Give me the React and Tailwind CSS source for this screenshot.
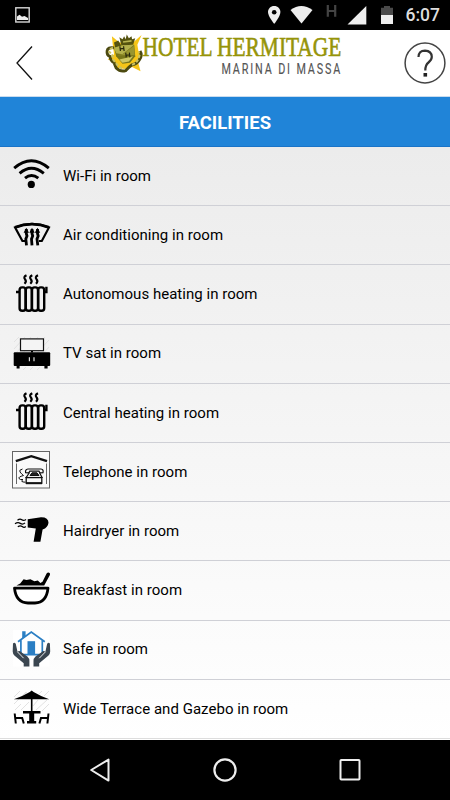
import { clsx } from "clsx";

function WifiIcon() {
  return (
    <g fill="none" stroke="#000" strokeWidth="2.9">
      <path d="M3.2 12.2Q20.3 -2.6 37.8 12.2" />
      <path d="M8.6 17.4Q20.3 7.2 32.8 17.4" />
      <path d="M14 22.2Q20.5 16.6 27.3 22.2" />
      <circle cx="20.3" cy="28.4" r="3.6" fill="#000" stroke="none" />
    </g>
  );
}

function AirIcon() {
  return (
    <g fill="none" stroke="#000" strokeWidth="2.2">
      <path d="M14 26H11.4L4 12.4Q21 5.4 38 12.4L30.8 26H28" />
      <path d="M4 12.4Q21 5.8 38 12.4" strokeWidth="2.8" />
      <path d="M15.3 14V18.5L16 21L14.8 24L15.5 30.4M21 14V18.5L21.7 21L20.5 24L21 30.4M26.5 14V18.5L27.2 21L26 24L26.8 30.4" strokeWidth="2.8" />
      <path d="M12.6 17.7L15.3 12.7L18 17.7ZM18.3 17.7L21 12.7L23.7 17.7ZM23.8 17.7L26.5 12.7L29.2 17.7Z" fill="#000" stroke="none" />
    </g>
  );
}

function HeatingIcon() {
  return (
    <g fill="none" stroke="#000" strokeWidth="2.4">
      <path d="M15.5 0.3Q12 2 14 4.2T13.5 8.8M21.3 0.3Q17.8 2 19.8 4.2T19.3 8.8M27 0.3Q23.5 2 25.5 4.2T25 8.8" strokeWidth="2.1" />
      <rect x="8.6" y="12.400" width="6" height="23.400" rx="2.6" />
      <rect x="14.8" y="12.400" width="6" height="23.400" rx="2.6" />
      <rect x="21" y="12.400" width="6" height="23.400" rx="2.6" />
      <rect x="27.2" y="12.400" width="6" height="23.400" rx="2.6" />
      <path d="M5 17H9M33 17H35.4V11.8" />
    </g>
  );
}

function TvIcon() {
  return (
    <g>
      <path d="M3 8L8 3M3 15L14 3M3 21L20 3M10 21L27 3M17 21L34 3M24 21L38 6M31 21L38 13M12 36L15 33M19 36L22 33M26 36L29 33" stroke="#e2e2e2" strokeWidth="1" />
      <rect x="9.5" y="4.9" width="23" height="11.8" fill="#f4f4f4" stroke="#111" strokeWidth="1.2" />
      <path d="M20 17H22V18.5H20Z" />
      <rect x="2.7" y="18.3" width="36.5" height="13.8" rx="1" />
      <path d="M5.6 32H8.6V34.4H5.6ZM33.4 32H36.6V34.4H33.4Z" />
      <path d="M18.4 23.3V27.2M23 23.3V27.2" stroke="#ddd" strokeWidth="1.2" />
    </g>
  );
}

function TelephoneIcon() {
  return (
    <g fill="none" stroke="#111">
      <rect x="1.5" y="-0.5" width="37" height="36.5" fill="#fafafa" stroke="#666" />
      <path d="M4.8 9.2L20.3 4.2L36 9.2" strokeWidth="2.4" />
      <path d="M5.5 11.5V32M35.5 11.5V32" stroke="#666" />
      <path d="M14.6 20.6Q14 17.4 17 17H30Q32.8 17.4 32 20.6L28.8 20.8L28 19.2H18.8L17.8 20.8Z" strokeWidth="1.2" />
      <path d="M18.5 20.5L15.2 25.5H31L28.5 20.5" strokeWidth="1.2" />
      <path d="M19 23.5L21 20.8H26L28 23.5Z" fill="#222" />
      <rect x="15.2" y="25.6" width="15.6" height="5.6" strokeWidth="1.3" />
      <path d="M15 31.2H31" strokeWidth="2" />
      <path d="M11.5 17Q7.5 18 9 20T12.5 23.5Q7 25 8 26.5T12 27.5Q8.5 30 14.5 30.2" />
    </g>
  );
}

function HairdryerIcon() {
  return (
    <g>
      <path d="M16.7 8.2L30 6.2Q37.5 6.1 37.5 11.8Q37 16.6 31.6 18.6L29.4 30.8H22.6L24.8 17.5L16.7 16.5Z" />
      <path d="M6.5 9.2Q9 7.4 10.8 8.8T15 8.4M4 12.800Q6.800 10.800 9.300 12.400T14 11.900M6.800 15.800Q9.300 14.200 11.200 15.600T14.800 15.600" fill="none" stroke="#000" strokeWidth="1.3" />
    </g>
  );
}

function BreakfastIcon() {
  return (
    <g>
      <path d="M5.4 14.4L9.2 12.6L12.6 8.3L15.5 8.9L19.4 8.2L23.4 10.2L26.8 9.5L29.4 12L31.5 10.8L35.6 2.4Q37.4 0.4 39 2.6Q39.4 4 37.8 6L33.2 14.6Z" />
      <path d="M3.5 17.2Q5 31.8 17 32H24Q35.5 31.8 37 17.2Z" fill="#fff" stroke="#000" strokeWidth="2.8" strokeLinejoin="round" />
    </g>
  );
}

function SafeIcon() {
  return (
    <g>
      <rect x="2" y="0" width="36.5" height="36.5" fill="#fff" />
      <path d="M11.2 1.2H14.6V6L11.2 8.6Z" fill="#2b7fc4" />
      <path d="M7 11.8L20.3 2L33.8 11.8M9.9 10V24.6H31.3V10" fill="none" stroke="#2b7fc4" strokeWidth="1.7" />
      <rect x="16.5" y="11.2" width="7.6" height="13.4" fill="#2b7fc4" />
      <path
        d="M2 13.5Q3.6 11.6 4.8 14L6.5 21.8Q8.4 20.2 10 22L16.4 26.6Q18.4 28.4 18.4 31V36.4H12.7V33.2L3.4 25.6Q1.8 24 1.7 21.6Z"
        fill="#3b4650"
      />
      <path
        d="M38.9 13.5Q37.3 11.6 36.1 14L34.4 21.8Q32.5 20.2 30.9 22L24.5 26.6Q22.5 28.4 22.5 31V36.4H28.2V33.2L37.5 25.6Q39.1 24 39.2 21.6Z"
        fill="#3b4650"
      />
      <path d="M6.4 21.8L12.6 28.2M34.5 21.8L28.3 28.2" stroke="#fff" strokeWidth="0.9" />
    </g>
  );
}

function TerraceIcon() {
  return (
    <g>
      <path d="M3 8L9 2M3 15L15 3M4 21L10 15M10 21L18 13M22 17L27 11M25 21L36 11M31 22L38 15M10 8L16 3M28 5L31 2M33 7L38 2" stroke="#e2e2e2" strokeWidth="1" />
      <path d="M2.8 10.3Q11.5 7.4 18.8 3L20.7 1.4L22.6 3Q30 7.4 38.2 10.3Z" />
      <path d="M19.9 9H21.5V22H29.5V24.4H23.2V32H25.2V34.4H16V32H18.2V24.4H12V22H19.9Z" />
      <path d="M3.7 24.5L4.8 34.5M4.4 28.9H11.2L12.8 34.5M37.5 24.5L36.4 34.5M36.8 28.9H30L28.4 34.5" fill="none" stroke="#000" strokeWidth="2" />
    </g>
  );
}

const facilities = [
  { label: "Wi-Fi in room", Icon: WifiIcon },
  { label: "Air conditioning in room", Icon: AirIcon },
  { label: "Autonomous heating in room", Icon: HeatingIcon },
  { label: "TV sat in room", Icon: TvIcon },
  { label: "Central heating in room", Icon: HeatingIcon },
  { label: "Telephone in room", Icon: TelephoneIcon },
  { label: "Hairdryer in room", Icon: HairdryerIcon },
  { label: "Breakfast in room", Icon: BreakfastIcon },
  { label: "Safe in room", Icon: SafeIcon },
  { label: "Wide Terrace and Gazebo in room", Icon: TerraceIcon },
];

function StatusBar() {
  return (
    <div className="flex h-[30px] shrink-0 items-center justify-between bg-black pl-[15px] pr-[10px]">
      <svg width="15" height="16" viewBox="0 0 15 16">
        <rect x="0.8" y="0.8" width="13.4" height="14.2" fill="none" stroke="#d8d8d8" strokeWidth="1.4" />
        <path d="M2 13V9.5L4.5 7.8L7 9.8L9.5 9L13 11V13Z" fill="#eee" />
      </svg>
      <div className="flex items-center">
        {/* location, wifi, network type, signal */}
        <svg width="99" height="30" viewBox="0 0 99 30" className="mr-[14px]">
          <path d="M6.2 6C2.6 6 0 8.6 0 12.1C0 16.5 6.2 24 6.2 24S12.4 16.5 12.4 12.1C12.4 8.6 9.8 6 6.2 6Z" fill="#eee" />
          <circle cx="6.2" cy="12.3" r="2.3" />
          <path d="M22.5 10Q33.3 2.2 44.5 10L33.5 23.6Z" fill="#eee" />
          <path d="M59.8 5V16.8M67.2 5V16.8M59.8 11H67.2" stroke="#444" strokeWidth="2.2" />
          <path d="M98.3 6V24.5H79.5Z" fill="#eee" />
        </svg>
        <svg width="12" height="18" viewBox="0 0 12 18" className="mr-[13px]">
          <path d="M0 9V1.8H3V0H9V1.8H12V9Z" fill="#4a4a4a" />
          <path d="M0 9H12V18H0Z" fill="#eee" />
        </svg>
        <span className="pt-px text-[17.5px] leading-none font-medium text-[#ddd]">6:07</span>
      </div>
    </div>
  );
}

function Crest() {
  return (
    <g transform="translate(-1.5 -1) scale(1.06)">
      {/* sun rays behind the shield */}
      <path
        d="M7 3L14 9L28 8L35 2L31 11L32 17L36 22L31 25L34 36L26 32L20 34L10 33L9 27L3 25L9 20L8 13Z"
        fill="#f5c518"
      />
      <path d="M9 14Q3 13 2.5 17Q2 21 5 22Q6 27 9 28L11 33Q15 37 20 35.500Q23 32 26 30Q31 29 33 25Q36 21 33.500 17" fill="none" stroke="#4c4a10" strokeWidth="2.8" />
      <path d="M8 14Q4 15 4.500 18Q8 20 8 25L12 30Q15 34 19 33M26 30Q31 28 32 24Q34 20 32 18" fill="none" stroke="#c9c263" strokeWidth="1.9" strokeDasharray="3 1.600" />
      {/* crown */}
      <path d="M14 4L17 6L18.5 3L20 6L21 1.5L23 5L25.5 3L26 6L29 5L27 11L16 12Z" fill="#54520f" />
      <path d="M9 9L13 7L16 12L10 14Z" fill="#54520f" />
      <path d="M17.5 8.5L25.5 7.5" stroke="#b8b450" strokeWidth="1.6" />
      {/* shield */}
      <path d="M9 14L17 11.5L28 11L29 22L24 28L17 29L11 22Z" fill="#77751a" />
      <path d="M9 14L17 11.5L28 11L17 20L11 19Z" fill="#b3b04c" />
      <path d="M12 21L17 20L28 12L28.5 21Z" fill="#98952f" />
      <path d="M14 25L27 22L23 27L17 28Z" fill="#cdc864" />
      <g stroke="#26250a" strokeWidth="1.1">
        <path d="M14.5 12.5L15 17M18 12.5L18.5 17M14.8 15L18.3 14.5" />
        <path d="M20 18.5L20.5 23M23.5 18.5L24 23M20.3 21L23.8 20.5" />
      </g>
    </g>
  );
}

function Logo() {
  return (
    <svg width="240" height="50" viewBox="0 -4 240 50" className="overflow-visible">
      <Crest />
      <g transform="translate(36.5 22) scale(0.8 1)">
        <text
          fontSize="26.5"
          textLength="248.5"
          lengthAdjust="spacingAndGlyphs"
          fill="#969409"
          stroke="#969409"
          strokeWidth="0.6"
          className="font-['Liberation_Serif',serif]"
        >
          HOTEL HERMITAGE
        </text>
      </g>
      <g transform="translate(115.5 40) scale(0.72 1)">
        <text fontSize="15" textLength="165" fill="#555" stroke="#555" strokeWidth="0.15" className="font-[Roboto,sans-serif]">
          MARINA DI MASSA
        </text>
      </g>
    </svg>
  );
}

function Header() {
  return (
    <header className="flex h-[66px] shrink-0 items-start justify-between bg-white pl-4 pr-[4px]">
      <svg width="17" height="36" viewBox="0 0 17 36" className="mt-[15px]">
        <path d="M16 1.5L1 18L16 34.5" fill="none" stroke="#111" strokeWidth="1.3" />
      </svg>
      <div className="ml-[14px]">
        <Logo />
      </div>
      <svg width="42" height="42" viewBox="0 0 42 42" className="mt-[12px]">
        <circle cx="21" cy="21" r="19.9" fill="none" stroke="#444" strokeWidth="1.5" />
        <path d="M14.5 15Q14.5 8.6 21 8.6Q27.6 8.9 27.8 14.8Q27.8 18 24.5 20.5Q21.3 23 21.3 28.5" fill="none" stroke="#333" strokeWidth="2.2" />
        <rect x="19.5" y="31" width="3.6" height="3.6" fill="#222" />
      </svg>
    </header>
  );
}

function NavBar() {
  return (
    <nav className="flex h-[60px] shrink-0 items-center justify-center gap-[99px] bg-black">
      <svg width="26" height="26" viewBox="0 0 26 26" fill="none" stroke="#eee" strokeWidth="2">
        <path d="M21.5 2.6V23.6L4.2 13Z" strokeLinejoin="round" />
      </svg>
      <svg width="26" height="26" viewBox="0 0 26 26" fill="none" stroke="#eee" strokeWidth="2.2">
        <circle cx="13" cy="13" r="10.6" />
      </svg>
      <svg width="26" height="26" viewBox="0 0 26 26" fill="none" stroke="#eee" strokeWidth="2">
        <rect x="3.5" y="3" width="19" height="19.5" rx="0.8" />
      </svg>
    </nav>
  );
}

export default function App() {
  return (
    <div className="flex h-[800px] w-[450px] flex-col overflow-hidden bg-white font-[Roboto,sans-serif]">
      <StatusBar />
      <Header />
      <h1 className="flex h-[51px] shrink-0 items-center justify-center border-t border-b border-t-[#c9dcef] border-b-[#1a74c8] bg-[#2084d8] pt-[5px] text-[18.5px] font-bold text-white">
        FACILITIES
      </h1>
      <ul className="flex h-[593px] shrink-0 flex-col bg-linear-to-b from-[#ececec] to-white pb-px">
        {facilities.map(({ label, Icon }, i) => (
          <li
            key={label}
            className={clsx(
              "flex flex-1 items-center border-b pl-[11px]",
              i === facilities.length - 1 ? "border-[#ddd]" : "border-[#cfd0d6]"
            )}
          >
            <svg width="40" height="40" viewBox="0 0 40 40" className="mr-[12px] shrink-0 overflow-visible">
              <Icon />
            </svg>
            <span className="text-[15px] tracking-[0.03px] text-black">{label}</span>
          </li>
        ))}
      </ul>
      <NavBar />
    </div>
  );
}
